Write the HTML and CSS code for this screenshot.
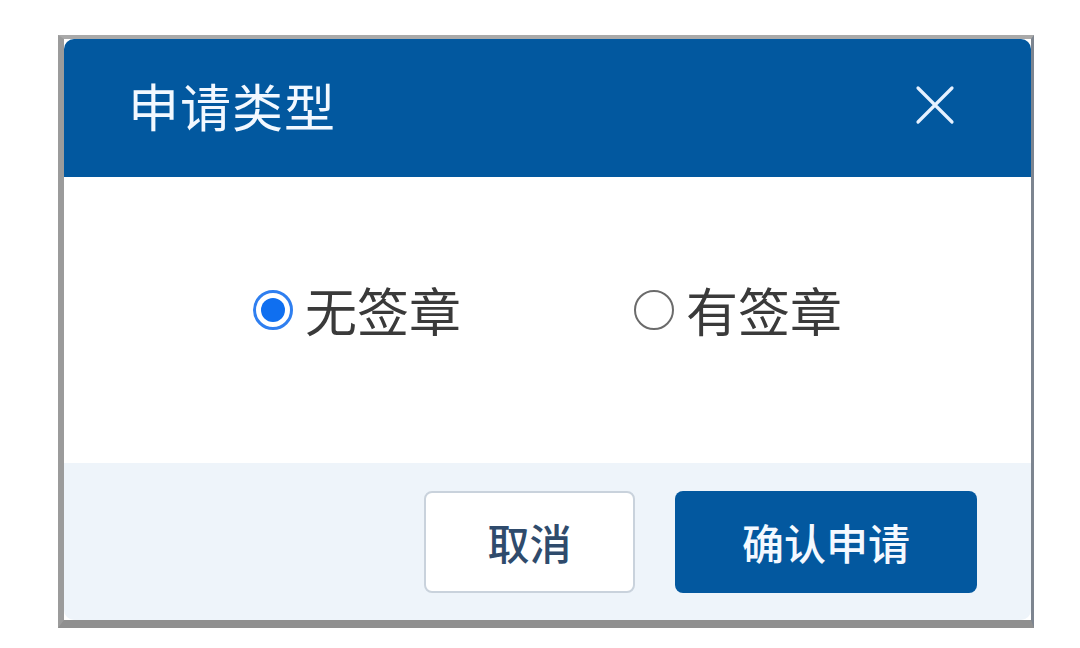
FILE: index.html
```html
<!DOCTYPE html>
<html lang="zh-CN">
<head>
<meta charset="utf-8">
<title>申请类型</title>
<link rel="stylesheet" href="styles.css">
</head>
<body>
<div class="frame">
  <div class="dialog">
    <div class="header">
      <span class="title">申请类型</span>
      <svg class="close" viewBox="0 0 40 40" width="40" height="40">
        <path d="M3 3 L37 37 M37 3 L3 37" stroke="#e6f1ff" stroke-width="3.2" stroke-linecap="round" fill="none"/>
      </svg>
    </div>
    <div class="body">
      <label class="radio">
        <span class="dot checked"><span class="inner"></span></span>
        <span class="label">无签章</span>
      </label>
      <label class="radio">
        <span class="dot"></span>
        <span class="label">有签章</span>
      </label>
    </div>
    <div class="footer">
      <button class="btn cancel">取消</button>
      <button class="btn confirm">确认申请</button>
    </div>
  </div>
</div>
</body>
</html>
```

FILE: styles.css
```css
html, body {
  margin: 0;
  padding: 0;
  background: #ffffff;
}
body {
  font-family: "Noto Sans CJK SC", "Noto Sans", sans-serif;
  padding: 35px 0 0 58px;
}
.frame {
  width: 967px;
  border-left: 6px solid #9b9b9b;
  border-top: 4px solid #a9a9a9;
  border-bottom: 8px solid #8f8f8f;
  border-right: 3px solid #7d8590;
  background: #ffffff;
}
.dialog {
  display: flex;
  flex-direction: column;
  height: 581px;
  border-radius: 10px;
  overflow: hidden;
  background: #ffffff;
}
.header {
  height: 138px;
  background: #02589f;
  display: flex;
  align-items: center;
  justify-content: space-between;
  padding: 0 76px 6px 64px;
  box-sizing: border-box;
}
.title {
  color: #f2f8ff;
  font-size: 51px;
  line-height: 1;
  letter-spacing: 1px;
}
.close {
  display: block;
}
.body {
  height: 286px;
  display: flex;
  align-items: center;
  justify-content: center;
  gap: 173px;
  padding-bottom: 20px;
  box-sizing: border-box;
}
.radio {
  display: flex;
  align-items: center;
  gap: 12px;
}
.dot {
  width: 40px;
  height: 40px;
  box-sizing: border-box;
  border-radius: 50%;
  border: 2px solid #6b6b6b;
  display: flex;
  align-items: center;
  justify-content: center;
  background: #fff;
}
.dot.checked {
  border: 3px solid #2f7ff0;
}
.inner {
  width: 24px;
  height: 24px;
  border-radius: 50%;
  background: #0f6ff0;
}
.label {
  font-size: 52px;
  color: #3a3a3a;
  line-height: 1;
}
.footer {
  flex: 1;
  background: #eef4fa;
  display: flex;
  justify-content: flex-end;
  align-items: center;
  gap: 40px;
  padding-right: 54px;
}
.btn {
  height: 102px;
  border-radius: 8px;
  font-family: "Noto Sans CJK SC", "Noto Sans", sans-serif;
  font-size: 42px;
  font-weight: 500;
  cursor: pointer;
}
.cancel {
  width: 211px;
  background: #ffffff;
  border: 2px solid #c9d2dc;
  color: #2f4b6c;
}
.confirm {
  width: 302px;
  background: #03589f;
  border: none;
  color: #f4f9ff;
}
```
